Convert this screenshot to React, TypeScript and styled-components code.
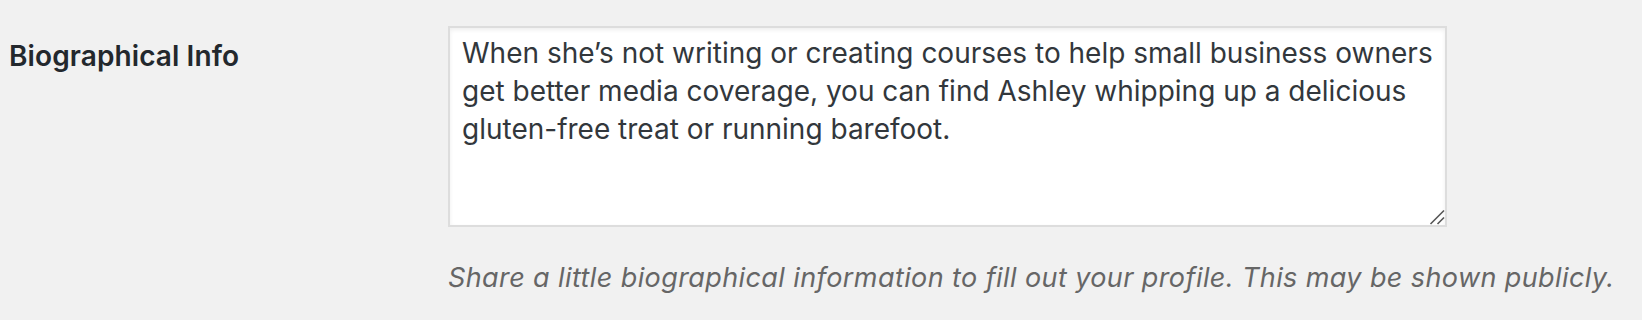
import React from "react";
import styled, { createGlobalStyle } from "styled-components";

const GlobalStyle = createGlobalStyle`
  html, body {
    margin: 0;
    padding: 0;
    background: #f1f1f1;
  }
  body {
    font-family: Inter, "Noto Sans", "Liberation Sans", sans-serif;
    color: #23282d;
  }
`;

const FormTable = styled.div`
  display: grid;
  grid-template-columns: 448px 999px;
  align-items: start;
  padding-top: 26px;
`;

const Label = styled.label`
  display: block;
  padding: 11px 0 0 9px;
  font-family: Inter, "Noto Sans", "Liberation Sans", sans-serif;
  font-size: 28px;
  line-height: 38px;
  font-weight: 600;
  letter-spacing: 0.1px;
  color: #23282d;
`;

const Field = styled.div`
  display: flex;
  flex-direction: column;
`;

const TextareaWrap = styled.div`
  position: relative;
  width: 999px;
  height: 201px;
`;

const Textarea = styled.textarea`
  display: block;
  box-sizing: border-box;
  width: 100%;
  height: 100%;
  margin: 0;
  padding: 6px 12px;
  border: 2px solid #dddddd;
  background: #ffffff;
  box-shadow: inset 0 2px 4px rgba(0, 0, 0, 0.07);
  font-family: Inter, "Noto Sans", "Liberation Sans", sans-serif;
  font-size: 28px;
  line-height: 38px;
  color: #32373c;
  outline: none;
  overflow: hidden;
  resize: none;
`;

const Grip = styled.svg`
  position: absolute;
  right: 2px;
  bottom: 2px;
  width: 16px;
  height: 16px;
  pointer-events: none;
`;

const Description = styled.p`
  margin: 31px 0 0;
  font-family: Inter, "Noto Sans", "Liberation Sans", sans-serif;
  font-size: 27px;
  line-height: 39px;
  font-style: italic;
  letter-spacing: 0.4px;
  color: #666666;
  white-space: nowrap;
`;

const bio =
  "When she\u2019s not writing or creating courses to help small business owners get better media coverage, you can find Ashley whipping up a delicious gluten-free treat or running barefoot.";

export default function App() {
  return (
    <>
      <GlobalStyle />
      <FormTable>
        <Label htmlFor="description">Biographical Info</Label>
        <Field>
          <TextareaWrap>
            <Textarea id="description" defaultValue={bio} />
            <Grip viewBox="0 0 16 16" aria-hidden="true">
              <line x1="1.5" y1="15" x2="15" y2="1.5" stroke="#555" strokeWidth="1.6" />
              <line x1="8.5" y1="15" x2="15" y2="8.5" stroke="#555" strokeWidth="1.6" />
            </Grip>
          </TextareaWrap>
          <Description>
            Share a little biographical information to fill out your profile. This may be shown publicly.
          </Description>
        </Field>
      </FormTable>
    </>
  );
}
